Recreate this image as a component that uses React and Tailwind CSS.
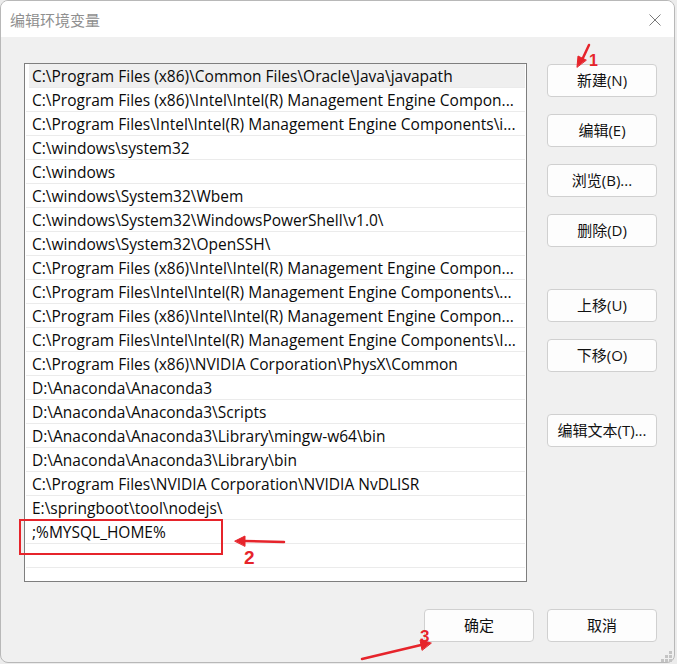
import React from 'react';

const paths = [
  'C:\\Program Files (x86)\\Common Files\\Oracle\\Java\\javapath',
  'C:\\Program Files (x86)\\Intel\\Intel(R) Management Engine Compon...',
  'C:\\Program Files\\Intel\\Intel(R) Management Engine Components\\i...',
  'C:\\windows\\system32',
  'C:\\windows',
  'C:\\windows\\System32\\Wbem',
  'C:\\windows\\System32\\WindowsPowerShell\\v1.0\\',
  'C:\\windows\\System32\\OpenSSH\\',
  'C:\\Program Files (x86)\\Intel\\Intel(R) Management Engine Compon...',
  'C:\\Program Files\\Intel\\Intel(R) Management Engine Components\\...',
  'C:\\Program Files (x86)\\Intel\\Intel(R) Management Engine Compon...',
  'C:\\Program Files\\Intel\\Intel(R) Management Engine Components\\I...',
  'C:\\Program Files (x86)\\NVIDIA Corporation\\PhysX\\Common',
  'D:\\Anaconda\\Anaconda3',
  'D:\\Anaconda\\Anaconda3\\Scripts',
  'D:\\Anaconda\\Anaconda3\\Library\\mingw-w64\\bin',
  'D:\\Anaconda\\Anaconda3\\Library\\bin',
  'C:\\Program Files\\NVIDIA Corporation\\NVIDIA NvDLISR',
  'E:\\springboot\\tool\\nodejs\\',
  ';%MYSQL_HOME%',
  '',
  '',
];

const font = { fontFamily: '"Open Sans", "Noto Sans CJK SC", sans-serif' };
const digitFont = { fontFamily: '"Liberation Sans", Arial, sans-serif' };

const Btn = ({ children, className = '' }) => (
  <button
    className={`w-[110px] h-[33px] shrink-0 bg-[#fdfdfd] border border-[#d0d0d0] rounded-[4px] text-[15px] text-[#111] flex items-center justify-center ${className}`}
  >
    {children}
  </button>
);

export default function App() {
  return (
    <div className="relative w-[677px] h-[664px] bg-[#ececec] overflow-hidden" style={font}>
      <div className="w-[675px] h-[663px] border border-[#b8b8b8] rounded-lg overflow-hidden flex flex-col bg-[#f0f0f0]">
        {/* title bar */}
        <div className="h-[36px] bg-white flex items-center justify-between pl-[9px] pr-[13px] pt-[2px] shrink-0">
          <span className="text-[15px] text-[#8f8f8f]">编辑环境变量</span>
          <svg width="12" height="12" viewBox="0 0 12 12" className="text-[#7a7a7a]">
            <path d="M0.5 0.5 L11.5 11.5 M11.5 0.5 L0.5 11.5" stroke="currentColor" strokeWidth="1" />
          </svg>
        </div>

        <div className="flex-1 flex flex-col pt-[26px] pl-[23px] pr-[17px]">
          <div className="flex gap-[20px]">
            {/* path list */}
            <div className="w-[504px] h-[519px] border border-[#7e7e7e] bg-white px-[1px] overflow-hidden">
              {paths.map((p, i) => (
                <div
                  key={i}
                  className={`h-[24px] shrink-0 border-b border-[#ebebeb] flex items-center pt-[3px] text-[15.5px] text-[#0a0a0a] whitespace-nowrap overflow-hidden ${i === 0 ? 'bg-[#efefef] ml-[3px] pl-[3px]' : 'pl-[6px]'}`}
                >
                  {p}
                </div>
              ))}
            </div>

            {/* buttons */}
            <div className="flex flex-col pt-px">
              <Btn>新建(N)</Btn>
              <Btn className="mt-[17px]">编辑(E)</Btn>
              <Btn className="mt-[17px]">浏览(B)...</Btn>
              <Btn className="mt-[17px]">删除(D)</Btn>
              <Btn className="mt-[42px]">上移(U)</Btn>
              <Btn className="mt-[17px]">下移(O)</Btn>
              <Btn className="mt-[42px]">编辑文本(T)...</Btn>
            </div>
          </div>

          <div className="flex justify-end gap-[13px] mt-[27px]">
            <Btn>确定</Btn>
            <Btn>取消</Btn>
          </div>
        </div>
      </div>

      {/* resize grip */}
      <div className="absolute left-[661px] top-[651px] grid grid-cols-3 gap-[1px]">
        {[0, 0, 1, 0, 1, 1, 1, 1, 1].map((v, i) => (
          <div key={i} className={`w-[3px] h-[3px] ${v ? 'bg-[#c4c4c4]' : ''}`} />
        ))}
      </div>

      {/* annotations */}
      <div className="absolute left-[19px] top-[519px] w-[204px] h-[36px] border-2 border-[#e6242b]" />
      <svg className="absolute left-0 top-0 pointer-events-none" width="677" height="664">
        <g stroke="#e6242b" strokeWidth="2.5" strokeLinecap="round" fill="#e6242b">
          <line x1="589" y1="45" x2="582" y2="60" />
          <polygon points="577,67 578,56 586,60" strokeWidth="1" />
          <line x1="284" y1="542" x2="244" y2="541" />
          <polygon points="235,541 245,536 245,546" strokeWidth="1" />
          <line x1="362" y1="659" x2="421" y2="645" />
          <polygon points="431,643 420,640 422,650" strokeWidth="1" />
        </g>
      </svg>
      <span className="absolute left-[589px] top-[53px] text-[16px] font-bold leading-none text-[#e6242b]" style={digitFont}>
        1
      </span>
      <span className="absolute left-[244px] top-[548px] text-[19px] font-bold leading-none text-[#e6242b]" style={digitFont}>
        2
      </span>
      <span className="absolute left-[420px] top-[628px] text-[17px] font-bold leading-none text-[#e6242b]" style={digitFont}>
        3
      </span>
    </div>
  );
}
